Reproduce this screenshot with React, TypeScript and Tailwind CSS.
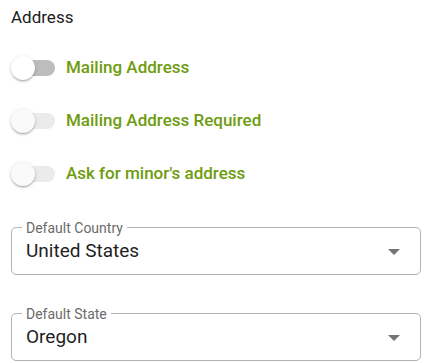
const toggles = [
  { label: "Mailing Address", disabled: false },
  { label: "Mailing Address Required", disabled: true },
  { label: "Ask for minor's address", disabled: true },
];

const selects = [
  { label: "Default Country", value: "United States" },
  { label: "Default State", value: "Oregon" },
];

function Toggle({ disabled }: { disabled: boolean }) {
  return (
    <div className="relative flex items-center w-[58px] h-[38px] shrink-0">
      <div
        className={
          "ml-[15px] w-[40px] h-[16px] rounded-full " +
          (disabled ? "bg-[#ebebeb]" : "bg-[#bdbdbd]")
        }
      />
      {/* thumb sits over the track */}
      <div
        className={
          "absolute left-[11px] top-[7px] w-[24px] h-[24px] rounded-full shadow-[0_2px_2px_-1px_rgba(0,0,0,0.2),0_1px_2px_0_rgba(0,0,0,0.14),0_1px_4px_0_rgba(0,0,0,0.12)] " +
          (disabled ? "bg-[#fafafa]" : "bg-white")
        }
      />
    </div>
  );
}

function Select({ label, value }: { label: string; value: string }) {
  return (
    <div className="relative flex items-center h-[48px] rounded-[5px] border border-[#b3b3b3]">
      <span className="absolute left-[10px] top-[-8px] px-[4px] bg-white text-[14px] leading-[16px] text-[#6b6b6b]">
        {label}
      </span>
      <span className="flex-1 pl-[14px] text-[19px] text-[#1f1f1f]">{value}</span>
      <svg viewBox="7 10 10 5" className="w-[12px] h-[6px] mr-[20px] mt-[2px]" fill="#757575">
        <path d="M7 10l5 5 5-5z" />
      </svg>
    </div>
  );
}

export default function App() {
  return (
    <div
      className="w-[432px] h-[363px] bg-white px-[11px] pt-[5px] overflow-hidden"
      style={{ fontFamily: "Roboto, 'Liberation Sans', sans-serif" }}
    >
      <div className="h-6 leading-6 text-[17px] text-[#1c1c1c]">Address</div>

      <div className="mt-[20px] -ml-[11px] flex flex-col gap-[15px]">
        {toggles.map((t) => (
          <div key={t.label} className="flex items-center h-[38px]">
            <Toggle disabled={t.disabled} />
            <span className="ml-[8px] text-[17px] font-medium text-[#6e9c10]">{t.label}</span>
          </div>
        ))}
      </div>

      <div className="mt-[34px] flex flex-col gap-[38px] pr-[0px]">
        {selects.map((s) => (
          <Select key={s.label} label={s.label} value={s.value} />
        ))}
      </div>
    </div>
  );
}
